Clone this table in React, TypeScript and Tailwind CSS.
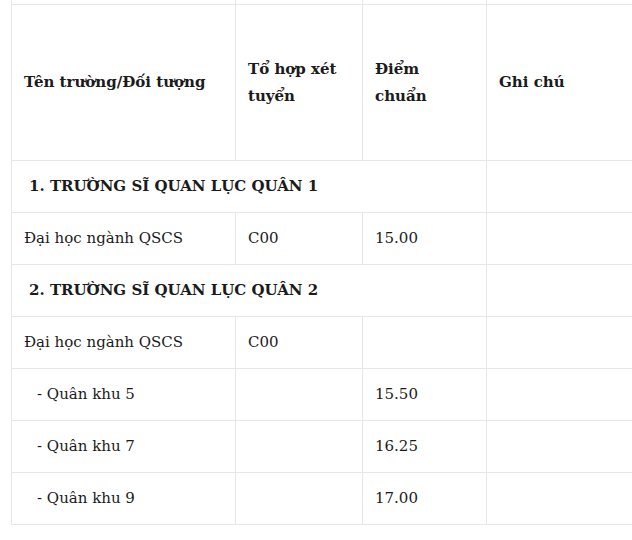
const rows: { kind: "section" | "row"; a: string; b?: string; c?: string; indent?: boolean }[] = [
  { kind: "section", a: "1. TRƯỜNG SĨ QUAN LỤC QUÂN 1" },
  { kind: "row", a: "Đại học ngành QSCS", b: "C00", c: "15.00" },
  { kind: "section", a: "2. TRƯỜNG SĨ QUAN LỤC QUÂN 2" },
  { kind: "row", a: "Đại học ngành QSCS", b: "C00", c: "" },
  { kind: "row", a: "- Quân khu 5", b: "", c: "15.50", indent: true },
  { kind: "row", a: "- Quân khu 7", b: "", c: "16.25", indent: true },
  { kind: "row", a: "- Quân khu 9", b: "", c: "17.00", indent: true },
];

const cell = "border border-[#e6e6e6] px-[12px] align-middle";

export default function App() {
  return (
    <div
      className="h-[540px] w-[632px] overflow-hidden bg-white text-[#1b1b1b]"
      style={{ fontFamily: '"DejaVu Serif", "Liberation Serif", serif' }}
    >
      <table className="ml-[11px] mt-[-12px] w-[649px] min-w-[649px] table-fixed border-collapse text-[15px]">
        <colgroup>
          <col className="w-[224px]" />
          <col className="w-[127px]" />
          <col className="w-[124px]" />
          <col className="w-[174px]" />
        </colgroup>
        <tbody>
          <tr className="h-[16px]">
            <td className={cell}></td>
            <td className={cell}></td>
            <td className={cell}></td>
            <td className={cell}></td>
          </tr>
          <tr className="h-[156px] text-[15px] font-bold leading-[27px]">
            <td className={cell}>Tên trường/Đối tượng</td>
            <td className={cell}>Tổ hợp xét tuyển</td>
            <td className={cell}>Điểm chuẩn</td>
            <td className={cell}>Ghi chú</td>
          </tr>
          {rows.map((r, i) =>
            r.kind === "section" ? (
              <tr key={i} className="h-[52px]">
                <td colSpan={3} className={`${cell} pl-[17px] text-[15px] font-bold`}>
                  {r.a}
                </td>
                <td className={cell}></td>
              </tr>
            ) : (
              <tr key={i} className="h-[52px]">
                <td className={`${cell} ${r.indent ? "pl-[25px]" : ""}`}>{r.a}</td>
                <td className={cell}>{r.b}</td>
                <td className={cell}>{r.c}</td>
                <td className={cell}></td>
              </tr>
            )
          )}
        </tbody>
      </table>
    </div>
  );
}
